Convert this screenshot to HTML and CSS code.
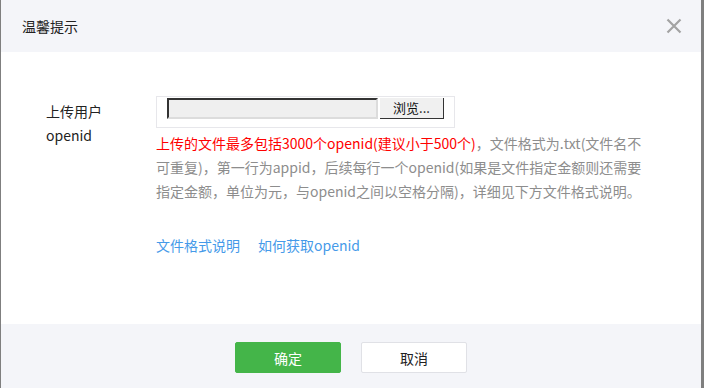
FILE: index.html
```html
<!DOCTYPE html>
<html lang="zh-CN">
<head>
    <meta charset="UTF-8">
    <meta name="viewport" content="width=device-width, initial-scale=1.0">
    <title>温馨提示</title>
    <link rel="stylesheet" href="styles.css">
</head>
<body>

    <div class="dialog">
        <!-- Header -->
        <div class="dialog-head">
            <h3>温馨提示</h3>
            <span class="close">
                <svg width="16" height="16" viewBox="0 0 16 16">
                    <path d="M1.5 1.5 L14.5 14.5 M14.5 1.5 L1.5 14.5" stroke="#a3a3a3" stroke-width="2.2" fill="none"/>
                </svg>
            </span>
        </div>

        <!-- Body -->
        <div class="dialog-body">
            <div class="form-row">
                <label class="form-label">上传用户openid</label>
                <div class="form-content">
                    <div class="upload-box">
                        <span class="file-path"></span>
                        <button class="browse">浏览...</button>
                    </div>
                    <p class="tips"><span class="warn">上传的文件最多包括3000个openid(建议小于500个)</span><span>，文件格式为.txt(文件名不可重复)，第一行为appid，后续每行一个openid(如果是文件指定金额则还需要指定金额，单位为元，与openid之间以空格分隔)，详细见下方文件格式说明。</span></p>
                    <div class="links">
                        <a href="#">文件格式说明</a>
                        <a href="#">如何获取openid</a>
                    </div>
                </div>
            </div>
        </div>

        <!-- Footer -->
        <div class="dialog-foot">
            <button class="btn btn-primary">确定</button>
            <button class="btn btn-default">取消</button>
        </div>
    </div>

</body>
</html>
```

FILE: styles.css
```css
html, body {
    margin: 0;
    height: 100%;
}

body {
    background: #7f7f7f;
    font-family: "Noto Sans CJK SC", "Microsoft YaHei", sans-serif;
    font-size: 14px;
    color: #222;
    overflow: hidden;
}

.dialog {
    width: 700px;
    height: 388px;
    margin-left: 1px;
    background: #fff;
}

.dialog-head {
    height: 52px;
    background: #f4f5f9;
    display: flex;
    align-items: center;
    justify-content: space-between;
    padding: 0 21px;
}

.dialog-head h3 {
    margin: 0;
    font-size: 14px;
    font-weight: normal;
    color: #222;
}

.close {
    display: flex;
    margin-right: -2px;
}

.dialog-body {
    height: 228px;
    padding: 44px 0 0 45px;
}

.form-row {
    display: flex;
}

.form-label {
    width: 80px;
    margin-right: 30px;
    padding-top: 3px;
    line-height: 24px;
    color: #222;
}

.form-content {
    width: 494px;
}

.upload-box {
    width: 299px;
    height: 32px;
    box-sizing: border-box;
    border: 1px solid #e7e7eb;
    padding: 1px 0 0 10px;
    display: flex;
    align-items: flex-start;
}

.file-path {
    width: 211px;
    height: 21px;
    box-sizing: border-box;
    background: #efefef;
    border-top: 2px solid #333;
    border-left: 2px solid #333;
    border-right: 2px solid #dcdcdc;
    border-bottom: 2px solid #dcdcdc;
}

.browse {
    margin-left: 2px;
    width: 64px;
    height: 21px;
    padding: 0;
    background: #f0f0f0;
    border: none;
    border-bottom: 1px solid #333;
    border-right: 1px solid #333;
    font-family: inherit;
    font-size: 13px;
    line-height: 20px;
    color: #111;
}

.tips {
    margin: 3px 0 0;
    line-height: 24px;
    color: #8d8d8d;
}

.warn {
    color: #f00;
}

.links {
    margin-top: 30px;
    line-height: 24px;
    display: flex;
    gap: 18px;
}

.links a {
    color: #459ae9;
    text-decoration: none;
}

.dialog-foot {
    height: 64px;
    box-sizing: border-box;
    background: #f4f5f9;
    padding-top: 18px;
    display: flex;
    justify-content: center;
    align-items: flex-start;
    gap: 20px;
}

.btn {
    width: 106px;
    height: 31px;
    border-radius: 2px;
    font-family: inherit;
    font-size: 14px;
    cursor: pointer;
}

.btn-primary {
    background: #44b549;
    border: 1px solid #44b549;
    color: #fff;
}

.btn-default {
    background: #fff;
    border: 1px solid #e0e1e6;
    color: #222;
}
```
